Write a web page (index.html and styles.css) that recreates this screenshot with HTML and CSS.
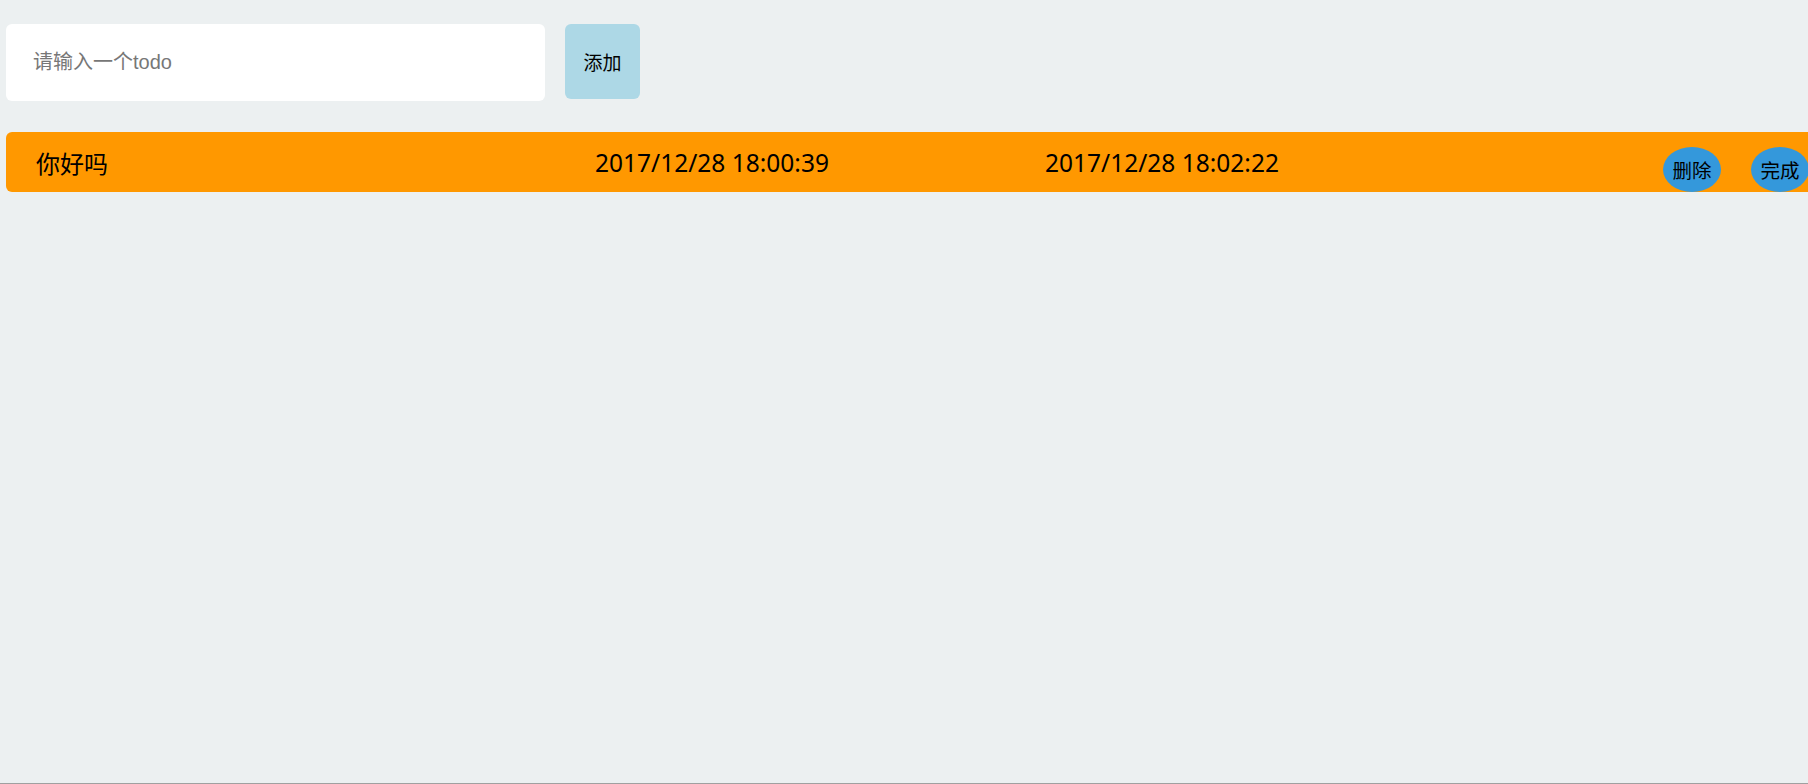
FILE: index.html
```html
<!DOCTYPE html>
<html lang="zh">
<head>
<meta charset="utf-8">
<title>todo</title>
<link rel="stylesheet" href="styles.css">
</head>
<body>
<div class="page">
  <div class="add-bar">
    <input class="todo-input" type="text" placeholder="请输入一个todo">
    <button class="add-btn">添加</button>
  </div>
  <div class="list">
    <div class="todo-row">
      <span class="col-name">你好吗</span>
      <span class="col-created">2017/12/28 18:00:39</span>
      <span class="col-updated">2017/12/28 18:02:22</span>
      <div class="actions">
        <button class="round-btn">删除</button>
        <button class="round-btn">完成</button>
      </div>
    </div>
  </div>
</div>
<div class="bottom-line"></div>
</body>
</html>
```
FILE: styles.css
```css
html, body {
  margin: 0;
  padding: 0;
  overflow: hidden;
  background: #ecf0f1;
  height: 100%;
}
body {
  font-family: "Noto Sans", "Noto Sans CJK SC", sans-serif;
  color: #000;
}
.page {
  padding: 24px 0 0 6px;
}
.add-bar {
  display: flex;
  gap: 20px;
  align-items: flex-start;
}
.todo-input {
  width: 539px;
  height: 77px;
  box-sizing: border-box;
  border: none;
  outline: none;
  border-radius: 6px;
  background: #fff;
  padding: 0 0 0 27px;
  font-family: "Liberation Sans", "Noto Sans CJK SC", sans-serif;
  font-size: 20px;
  color: #333;
}
.todo-input::placeholder {
  color: #777;
}
.add-btn {
  width: 75px;
  height: 75px;
  border: none;
  border-radius: 6px;
  background: #add8e6;
  font-family: "Noto Sans CJK SC", sans-serif;
  font-size: 19px;
  color: #000;
  padding: 0;
}
.list {
  margin-top: 31px;
}
.todo-row {
  width: 1830px;
  height: 60px;
  box-sizing: border-box;
  background: #ff9800;
  border-radius: 6px;
  display: flex;
  align-items: center;
  padding-left: 30px;
  font-size: 24.5px;
}
.col-name {
  width: 559px;
  font-family: "Noto Sans CJK SC", sans-serif;
  font-size: 24px;
}
.col-created {
  width: 450px;
}
.col-updated {
  flex: 1;
}
.actions {
  align-self: flex-end;
  display: flex;
  gap: 30px;
  margin-right: 27px;
}
.round-btn {
  width: 58px;
  height: 45px;
  border: none;
  border-radius: 50%;
  background: #3498db;
  font-family: "Noto Sans CJK SC", sans-serif;
  font-size: 19.5px;
  color: #000;
  padding: 0;
}
.bottom-line {
  position: fixed;
  left: 0;
  right: 0;
  bottom: 0;
  height: 1px;
  background: #a0a0a0;
}
```
